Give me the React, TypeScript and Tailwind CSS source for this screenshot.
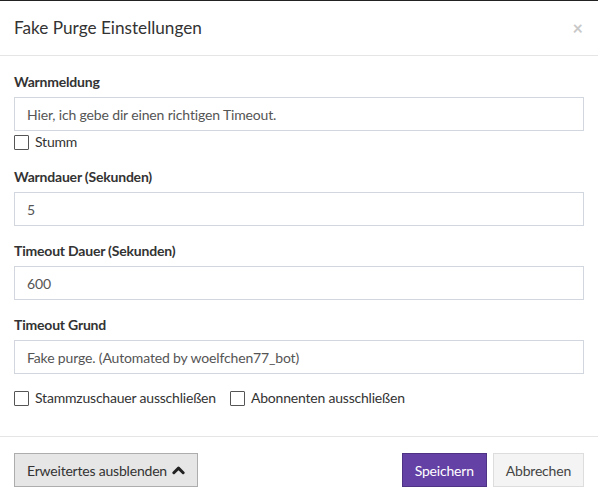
const font = { fontFamily: '"Lato", "Noto Sans", sans-serif' };

function Field({ label, value }: { label: string; value: string }) {
  return (
    <div className="flex flex-col">
      <label className="text-[14px] font-bold leading-[20px] tracking-[-0.2px] text-[#333]">
        {label}
      </label>
      <input
        readOnly
        value={value}
        className="mt-[5px] h-[34px] w-full border border-[#d2d6de] bg-white px-[12px] text-[14px] tracking-[-0.15px] text-[#555] outline-none"
      />
    </div>
  );
}

function Check({ label }: { label: string }) {
  return (
    <label className="flex items-center gap-[6px] text-[14px] leading-[20px] tracking-[-0.2px] text-[#333]">
      <span className="h-[15px] w-[15px] rounded-[1px] border border-[#555] bg-white" />
      {label}
    </label>
  );
}

export default function App() {
  return (
    <div
      className="flex h-[501px] w-[598px] flex-col border-t border-[#222] bg-white"
      style={font}
    >
      <div className="flex h-[55px] items-center justify-between border-b border-[#e5e5e5] px-[14px]">
        <h4 className="text-[17.2px] leading-[20px] text-[#333]">
          Fake Purge Einstellungen
        </h4>
        <span className="mr-[1px] text-[18px] font-bold leading-none text-[#c8c8c8]">
          ×
        </span>
      </div>
      <div className="flex h-[381px] flex-col border-b border-[#e5e5e5] px-[14px] pt-[16px]">
        <Field label="Warnmeldung" value="Hier, ich gebe dir einen richtigen Timeout." />
        <div className="pt-[1px]">
          <Check label="Stumm" />
        </div>
        <div className="mt-[15px] flex flex-col gap-[15px]">
          <Field label="Warndauer (Sekunden)" value="5" />
          <Field label="Timeout Dauer (Sekunden)" value="600" />
          <Field label="Timeout Grund" value="Fake purge. (Automated by woelfchen77_bot)" />
        </div>
        <div className="mt-[14px] flex items-center gap-[14px]">
          <Check label="Stammzuschauer ausschließen" />
          <Check label="Abonnenten ausschließen" />
        </div>
      </div>
      <div className="flex items-start justify-between px-[14px] pt-[16px]">
        <button className="flex h-[34px] items-center gap-[5px] border border-[#adadad] bg-[#e6e6e6] px-[12px] text-[14px] tracking-[-0.2px] text-[#333]">
          Erweitertes ausblenden
          <svg viewBox="0 0 14 10" className="h-[10px] w-[13px]">
            <path
              d="M2 8 L7 3 L12 8"
              fill="none"
              stroke="#222"
              strokeWidth="3.2"
              strokeLinecap="round"
              strokeLinejoin="round"
            />
          </svg>
        </button>
        <div className="flex gap-[6px]">
          <button className="h-[34px] border border-[#4e3385] bg-[#6441a5] px-[12px] text-[14px] tracking-[-0.2px] text-white">
            Speichern
          </button>
          <button className="h-[34px] border border-[#ddd] bg-[#f4f4f4] px-[12px] text-[14px] tracking-[-0.2px] text-[#444]">
            Abbrechen
          </button>
        </div>
      </div>
    </div>
  );
}
